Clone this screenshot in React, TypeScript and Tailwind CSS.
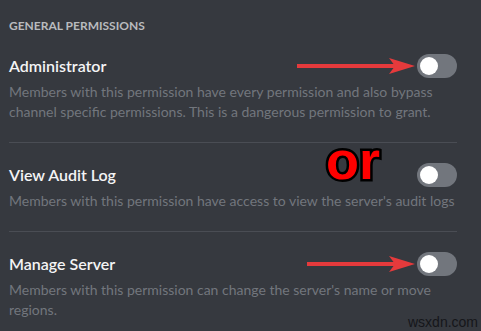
import React from "react";

const perms = [
  {
    title: "Administrator",
    description:
      "Members with this permission have every permission and also bypass channel specific permissions. This is a dangerous permission to grant.",
    arrow: true,
  },
  {
    title: "View Audit Log",
    description: "Members with this permission have access to view the server's audit logs",
    arrow: false,
  },
  {
    title: "Manage Server",
    description: "Members with this permission can change the server's name or move regions.",
    arrow: true,
  },
];

function Toggle() {
  return (
    <div className="w-[40px] h-[24px] rounded-full bg-[#72767d] flex items-center px-[3px] shrink-0">
      <div className="w-[18px] h-[18px] rounded-full bg-white" />
    </div>
  );
}

function Arrow({ width }: { width: number }) {
  return (
    <svg width={width} height="18" viewBox={`0 0 ${width} 18`} className="shrink-0">
      <rect x="0" y="7" width={width - 20} height="4" fill="#e53a3c" />
      <path d={`M${width - 26} 1 L${width} 9 L${width - 26} 17 L${width - 20} 9 Z`} fill="#e53a3c" />
    </svg>
  );
}

export default function App() {
  return (
    <div className="relative w-[481px] h-[331px] overflow-hidden bg-[#36393f] pl-[9px] pr-[24px] pt-[18px] font-['Lato','Open_Sans',sans-serif]">
      <div className="text-[12px] leading-[16px] font-bold uppercase text-[#b9bbbe] mb-[20px]">
        General Permissions
      </div>
      {perms.map((p, i) => (
        <div key={p.title} className={i < perms.length - 1 ? "pb-[20px] mb-[20px] border-b border-[#4a4d54]" : ""}>
          <div className="h-[24px] flex items-center">
            <div className="flex-1 text-[16px] font-semibold text-[#f4f4f5]">{p.title}</div>
            {p.arrow && (
              <div className="mr-[2px]">
                <Arrow width={i === 0 ? 118 : 108} />
              </div>
            )}
            <Toggle />
          </div>
          <div className="mt-[4px] text-[14px] leading-[20px] text-[#72767d]">{p.description}</div>
        </div>
      ))}
      <div
        className="absolute left-[326px] top-[133px] text-[54px] font-bold leading-none text-[#ff0000] font-['Liberation_Sans',Arial,sans-serif]"
        style={{ WebkitTextStroke: "5px #000", paintOrder: "stroke fill" }}
      >
        or
      </div>
      <div className="absolute left-[408px] top-[313px] text-[14px] leading-[18px] text-[#15161a] font-['Liberation_Sans',Arial,sans-serif]">
        wsxdn.com
      </div>
    </div>
  );
}
